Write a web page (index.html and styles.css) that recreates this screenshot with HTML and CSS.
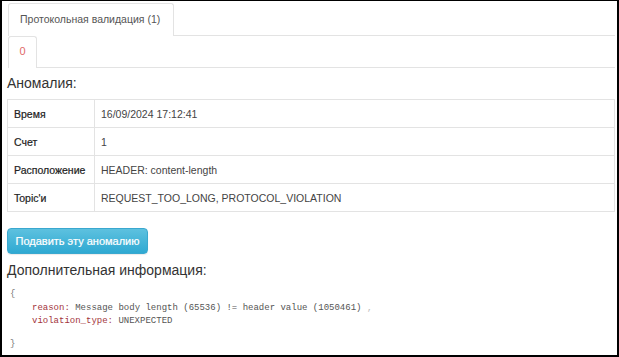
FILE: index.html
```html
<!DOCTYPE html>
<html>
<head>
<meta charset="utf-8">
<link rel="stylesheet" href="styles.css">
</head>
<body>
<div class="frame">
  <div class="tabs tabs-top">
    <div class="tab">Протокольная валидация (1)</div>
  </div>
  <div class="tabs tabs-sub">
    <div class="tab tab-red">0</div>
  </div>
  <h3 class="heading">Аномалия:</h3>
  <table class="info">
    <tr><th>Время</th><td>16/09/2024 17:12:41</td></tr>
    <tr><th>Счет</th><td>1</td></tr>
    <tr><th>Расположение</th><td>HEADER: content-length</td></tr>
    <tr><th>Topic'и</th><td>REQUEST_TOO_LONG, PROTOCOL_VIOLATION</td></tr>
  </table>
  <button class="btn">Подавить эту аномалию</button>
  <h3 class="heading heading2">Дополнительная информация:</h3>
  <div class="code">
    <div class="brace"><span class="brace-glyph">{</span></div>
    <div class="line"><span class="key">reason:</span> <span class="val">Message body length (65536) != header value (1050461)</span> <span class="comma">,</span></div>
    <div class="line"><span class="key">violation_type:</span> <span class="val">UNEXPECTED</span></div>
    <div class="brace brace-end"><span class="brace-glyph">}</span></div>
  </div>
</div>
</body>
</html>
```
FILE: styles.css
```css
html, body {
  margin: 0;
  padding: 0;
  background: #fff;
}
.frame {
  box-sizing: border-box;
  width: 619px;
  height: 357px;
  border-style: solid;
  border-color: #000;
  border-width: 1px 2px 2px 2px;
  padding: 2px 0 0 5px;
  font-family: "Liberation Sans", Arial, sans-serif;
  color: #333;
  overflow: hidden;
}
.tabs {
  display: flex;
  border-bottom: 1px solid #e3e3e3;
  margin: 0 2px 0 1px;
}
.tab {
  box-sizing: border-box;
  border: 1px solid #e3e3e3;
  border-bottom: none;
  border-radius: 3px 3px 0 0;
  font-size: 10.5px;
  color: #555;
  background: #fff;
  margin-bottom: -1px;
  padding: 0 11px;
  line-height: 31px;
  height: 33px;
  white-space: nowrap;
}
.tabs-top .tab {
  width: 166px;
}
.tabs-sub .tab {
  width: 29px;
  padding: 0;
  text-align: center;
  height: 32px;
  line-height: 29px;
  font-size: 11px;
}
.tab-red {
  color: #e06a6a;
}
.heading {
  margin: 0;
  font-weight: normal;
  font-size: 14px;
  line-height: 18px;
  color: #333;
  padding: 6px 0 7px 0;
}
.info {
  border-collapse: collapse;
  width: 608px;
  font-size: 10.5px;
}
.info th, .info td {
  border: 1px solid #e3e3e3;
  height: 27px;
  padding: 0 6px;
  text-align: left;
  vertical-align: middle;
}
.info th {
  width: 74px;
  font-weight: normal;
  color: #222;
  -webkit-text-stroke: 0.2px #222;
}
.info td {
  color: #444;
}
.btn {
  display: block;
  margin: 16px 0 0 0;
  width: 141px;
  height: 26px;
  border: 1px solid #3aa8cf;
  border-radius: 4px;
  background: linear-gradient(#5dc1df, #2fa9d2);
  color: #fff;
  font-family: "Liberation Sans", Arial, sans-serif;
  font-size: 11px;
  padding: 0;
  -webkit-text-stroke: 0.2px #fff;
  box-shadow: 0 1px 1px rgba(0,0,0,0.08);
}
.heading2 {
  padding: 7px 0 9px 0;
}
.code {
  font-family: "Liberation Mono", "DejaVu Sans Mono", monospace;
  font-size: 9px;
  line-height: 13.5px;
  color: #555;
  padding-left: 3px;
}
.brace-glyph {
  color: #777777;
}
.brace-end {
  margin-top: 9px;
}
.line {
  padding-left: 22px;
}
.key {
  color: #a3343c;
}
.val {
  color: #555;
}
.comma {
  color: #bbb;
}
```
